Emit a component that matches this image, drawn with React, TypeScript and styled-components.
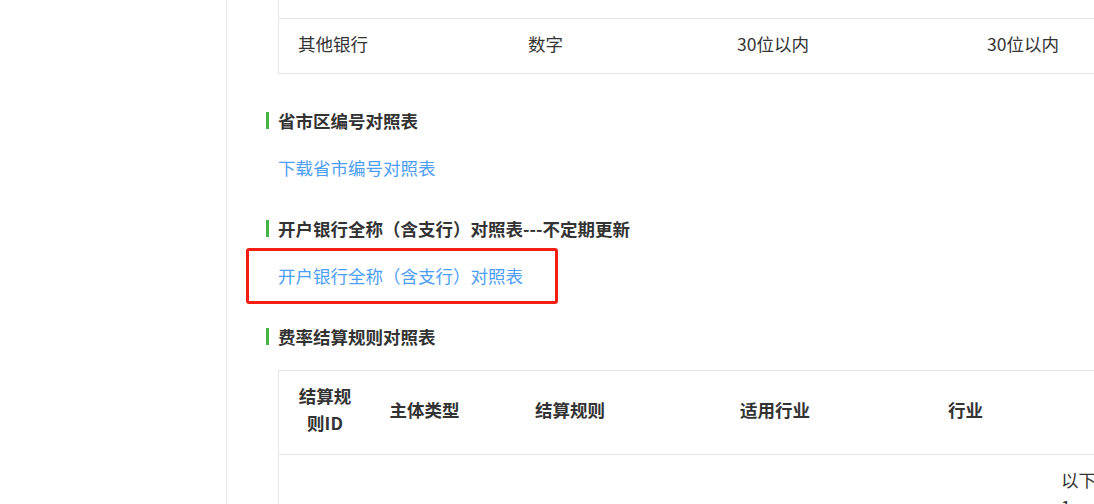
import styled, { createGlobalStyle } from 'styled-components';

const GlobalStyle = createGlobalStyle`
    html, body {
        margin: 0;
        padding: 0;
        background: #fff;
        overflow: hidden;
    }
    body {
        font-family: "Microsoft YaHei", "Noto Sans CJK SC", "Noto Sans", sans-serif;
        color: #333;
        font-size: 17.5px;
        line-height: 27px;
    }
`;

const Layout = styled.div`
    display: flex;
    width: 1400px;
    height: 504px;
    overflow: hidden;
`;

const Sidebar = styled.aside`
    flex: 0 0 226px;
    border-right: 1px solid #e6e6e6;
`;

const Main = styled.main`
    flex: 1;
    padding-left: 39px;
`;

const Indent = styled.div`
    padding-left: 12px;
`;

const Table = styled.div<{ $top?: number; $bordered?: boolean }>`
    border-left: 1px solid #e6e6e6;
    border-top: ${(p) => (p.$bordered ? '1px solid #e6e6e6' : 'none')};
    margin-top: ${(p) => p.$top ?? 0}px;
    width: 1100px;
`;

const Row = styled.div<{ $cols: string; $h?: number }>`
    display: grid;
    grid-template-columns: ${(p) => p.$cols};
    border-bottom: 1px solid #e6e6e6;
    ${(p) => (p.$h !== undefined ? `height: ${p.$h}px;` : '')}
`;

const Cell = styled.div`
    padding: 11px 19px 16px;
`;

const HeadCell = styled.div`
    padding: 11px 16px 18px;
    font-weight: bold;
    text-align: center;
    display: flex;
    align-items: center;
    justify-content: center;
`;

const BodyCell = styled.div`
    padding: 11px 18px;
    white-space: nowrap;
`;

const Heading = styled.h3<{ $top: number }>`
    margin: ${(p) => p.$top}px 0 0;
    font-size: 17.5px;
    line-height: 27px;
    font-weight: bold;
    color: #333;
    display: flex;
    align-items: center;
    gap: 9px;

    &::before {
        content: '';
        width: 3px;
        height: 17px;
        background: #42b549;
    }
`;

const LinkWrap = styled.div<{ $top: number }>`
    position: relative;
    margin-top: ${(p) => p.$top}px;
    width: max-content;
`;

const Link = styled.a`
    color: #4d9ef7;
    text-decoration: none;
    line-height: 27px;
    cursor: pointer;
`;

const Highlight = styled.span`
    position: absolute;
    left: -32px;
    top: -14px;
    width: 312px;
    height: 56px;
    box-sizing: border-box;
    border: 3px solid #f41f12;
    border-radius: 3px;
    pointer-events: none;
`;

const table1Cols = '230px 209px 250px 1fr';
const table2Cols = '92px 107px 184px 226px 155px 1fr';

export default function App() {
    return (
        <>
            <GlobalStyle />
            <Layout>
                <Sidebar />
                <Main>
                    <Indent>
                        <Table>
                            <Row $cols={table1Cols} $h={18} />
                            <Row $cols={table1Cols}>
                                <Cell>其他银行</Cell>
                                <Cell>数字</Cell>
                                <Cell>30位以内</Cell>
                                <Cell>30位以内</Cell>
                            </Row>
                        </Table>
                    </Indent>

                    <Heading $top={33}>省市区编号对照表</Heading>
                    <Indent>
                        <LinkWrap $top={20}>
                            <Link>下载省市编号对照表</Link>
                        </LinkWrap>
                    </Indent>

                    <Heading $top={34}>开户银行全称（含支行）对照表---不定期更新</Heading>
                    <Indent>
                        <LinkWrap $top={20}>
                            <Link>开户银行全称（含支行）对照表</Link>
                            <Highlight />
                        </LinkWrap>
                    </Indent>

                    <Heading $top={34}>费率结算规则对照表</Heading>
                    <Indent>
                        <Table $top={20} $bordered>
                            <Row $cols={table2Cols}>
                                <HeadCell>结算规则ID</HeadCell>
                                <HeadCell>主体类型</HeadCell>
                                <HeadCell>结算规则</HeadCell>
                                <HeadCell>适用行业</HeadCell>
                                <HeadCell>行业</HeadCell>
                                <HeadCell />
                            </Row>
                            <Row $cols={table2Cols}>
                                <BodyCell />
                                <BodyCell />
                                <BodyCell />
                                <BodyCell />
                                <BodyCell />
                                <BodyCell>
                                    以下行业适用
                                    <br />
                                    1.
                                </BodyCell>
                            </Row>
                        </Table>
                    </Indent>
                </Main>
            </Layout>
        </>
    );
}
